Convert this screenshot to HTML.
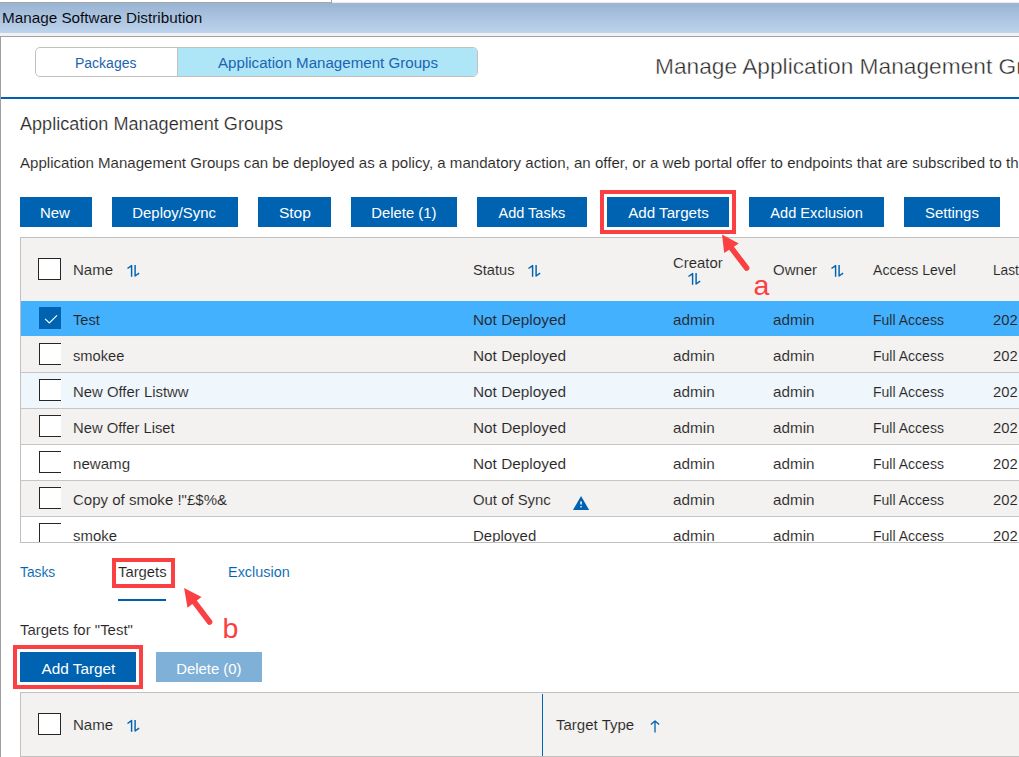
<!DOCTYPE html>
<html lang="en"><head><meta charset="utf-8"><title>Manage Software Distribution</title>
<style>
html,body{margin:0;padding:0;background:#fff}
#root{width:1019px;height:757px;overflow:hidden;position:relative;background:#fff;
 font-family:"Liberation Sans",sans-serif;font-size:15.5px;color:#272625}
.a{position:absolute}
.t{position:absolute;white-space:nowrap;line-height:20px;transform-origin:0 0;-webkit-text-stroke:0.1px #fff}
.g .t,.t.g{-webkit-text-stroke-color:#f3f2f1}
.hv .t{-webkit-text-stroke-color:#eff6fc}
.sel .t{-webkit-text-stroke-color:#44b1ff}
.tb .t,.t.tb{-webkit-text-stroke-color:#abc3e0}
.btn span{display:inline-block}
.btn{position:absolute;height:30px;background:#0063b1;color:#fff;text-align:center;
 white-space:nowrap;line-height:20px;box-sizing:border-box}
.btn.dis{background:#7fb1d8}
.row{position:absolute;left:21px;width:998px;height:35px;border-bottom:1px solid #c8c6c4}
.cb{position:absolute;left:18px;top:6px;width:22px;height:22px;box-sizing:border-box;background:#fff;
 border:1px solid #272625;border-right:0}
.cb.on{background:#0063b1;border:0}
.hcb{position:absolute;width:23px;height:22px;box-sizing:border-box;background:#fff;border:1px solid #272625}
svg{position:absolute;overflow:visible}
</style></head><body><div id="root">

<div class="a" style="left:0;top:2px;width:332px;height:1px;background:#a9a6a2"></div>
<div class="a" style="left:331px;top:0;width:1px;height:3px;background:#a9a6a2"></div>
<div class="a" style="left:0;top:3px;width:1019px;height:30px;background:linear-gradient(#98b3d3,#bed4ed)"></div>
<div class="a" style="left:332px;top:2px;width:687px;height:1px;background:#e9e9ea"></div>
<div class="a" style="left:332px;top:3px;width:687px;height:1px;background:#a9b5de"></div>
<div class="a" style="left:0;top:33px;width:1019px;height:3px;background:#f1f1f1"></div>
<div class="a" style="left:0;top:36px;width:1019px;height:1px;background:#a0a0a0"></div>
<div class="a" style="left:0;top:37px;width:1px;height:720px;background:#a0a0a0"></div>
<span class="t tb" style="left:2.15px;top:7.70px;color:#000;transform:scaleX(0.9853);">Manage Software Distribution</span>
<div class="a" style="left:35px;top:47px;width:443px;height:30px;box-sizing:border-box;border:1px solid #c4c0c0;border-radius:5px;overflow:hidden;background:#fff"><div class="a" style="left:141px;top:0;width:1px;height:28px;background:#c3c3c3"></div><div class="a" style="left:142px;top:0;width:300px;height:28px;background:#aee6f8"></div></div>
<span class="t " style="left:75.35px;top:52.50px;color:#1c64b0;transform:scaleX(0.9028);-webkit-text-stroke:0;">Packages</span>
<span class="t " style="left:217.87px;top:52.50px;color:#1c64b0;transform:scaleX(0.9745);-webkit-text-stroke:0;">Application Management Groups</span>
<span class="t " style="left:655.24px;top:57.40px;font-size:22px;transform:scaleX(1.0327);-webkit-text-stroke:0.4px #fff;">Manage Application Management Groups</span>
<div class="a" style="left:1px;top:97px;width:1018px;height:2px;background:#0060b2"></div>
<span class="t " style="left:20.16px;top:114.00px;font-size:18px;transform:scaleX(1.0036);-webkit-text-stroke:0.2px #fff;">Application Management Groups</span>
<span class="t " style="left:20.17px;top:152.70px;transform:scaleX(0.9731);">Application Management Groups can be deployed as a policy, a mandatory action, an offer, or a web portal offer to endpoints that are subscribed to th</span>
<div class="btn " style="left:20px;top:197px;width:72px;padding-top:5.50px"><span style="transform:translateX(-0.63px) scaleX(0.9639)">New</span></div>
<div class="btn " style="left:112px;top:197px;width:126px;padding-top:5.50px"><span style="transform:translateX(-0.41px) scaleX(0.9598)">Deploy/Sync</span></div>
<div class="btn " style="left:258px;top:197px;width:73px;padding-top:5.50px"><span style="transform:translateX(-0.03px) scaleX(1.0055)">Stop</span></div>
<div class="btn " style="left:351px;top:197px;width:106px;padding-top:5.50px"><span style="transform:translateX(-0.15px) scaleX(0.9556)">Delete (1)</span></div>
<div class="btn " style="left:477px;top:197px;width:110px;padding-top:5.50px"><span style="transform:translateX(0.25px) scaleX(0.9358)">Add Tasks</span></div>
<div class="btn " style="left:607px;top:197px;width:122px;padding-top:5.50px"><span style="transform:translateX(0.26px) scaleX(0.9775)">Add Targets</span></div>
<div class="btn " style="left:749px;top:197px;width:135px;padding-top:5.50px"><span style="transform:translateX(0.46px) scaleX(0.9415)">Add Exclusion</span></div>
<div class="btn " style="left:904px;top:197px;width:96px;padding-top:5.50px"><span style="transform:translateX(-0.07px) scaleX(0.9609)">Settings</span></div>
<div class="a" style="left:20px;top:237px;width:1010px;height:306px;box-sizing:border-box;border:1px solid #c2c0be;background:#fff"></div>
<div class="a" style="left:21px;top:238px;width:998px;height:63px;background:#f3f2f1"></div>
<div class="hcb" style="left:38px;top:258px"></div>
<span class="t g" style="left:72.60px;top:259.80px;transform:scaleX(0.9715);">Name</span>
<svg style="left:127px;top:265.2px" width="13" height="12" viewBox="0 0 13 12"><path d="M0.5 3.5 L4.6 0.6 V11.7 M8.1 -0.1 V11 L12.1 8.1" fill="none" stroke="#0063b1" stroke-width="1.45" stroke-linejoin="round"/></svg>
<span class="t g" style="left:472.60px;top:259.80px;transform:scaleX(0.9451);">Status</span>
<svg style="left:527.7px;top:265.2px" width="13" height="12" viewBox="0 0 13 12"><path d="M0.5 3.5 L4.6 0.6 V11.7 M8.1 -0.1 V11 L12.1 8.1" fill="none" stroke="#0063b1" stroke-width="1.45" stroke-linejoin="round"/></svg>
<span class="t g" style="left:672.60px;top:253.00px;transform:scaleX(0.9606);">Creator</span>
<svg style="left:688.1px;top:272.6px" width="13" height="12" viewBox="0 0 13 12"><path d="M0.5 3.5 L4.6 0.6 V11.7 M8.1 -0.1 V11 L12.1 8.1" fill="none" stroke="#0063b1" stroke-width="1.45" stroke-linejoin="round"/></svg>
<span class="t g" style="left:772.60px;top:259.80px;transform:scaleX(0.9649);">Owner</span>
<svg style="left:831.2px;top:265.2px" width="13" height="12" viewBox="0 0 13 12"><path d="M0.5 3.5 L4.6 0.6 V11.7 M8.1 -0.1 V11 L12.1 8.1" fill="none" stroke="#0063b1" stroke-width="1.45" stroke-linejoin="round"/></svg>
<span class="t g" style="left:872.60px;top:260.40px;transform:scaleX(0.9071);">Access Level</span>
<span class="t g" style="left:992.60px;top:259.80px;transform:scaleX(0.8841);">Last</span>
<div class="a" style="left:21px;top:301px;width:998px;height:241px;overflow:hidden">
<div class="row sel" style="left:0;top:0px;background:#44b1ff;border-bottom-color:#f3efee">
<div class="cb on"></div><svg style="left:18px;top:6px" width="22" height="22" viewBox="0 0 22 22"><path d="M6.1 11.9 L10.3 16 L18 8.3" fill="none" stroke="#fff" stroke-width="1.15"/></svg>
<span class="t " style="left:51.60px;top:8.60px;transform:scaleX(0.9466);">Test</span>
<span class="t " style="left:451.60px;top:8.60px;transform:scaleX(0.9901);">Not Deployed</span>
<span class="t " style="left:651.60px;top:8.60px;transform:scaleX(0.9876);">admin</span>
<span class="t " style="left:751.60px;top:8.60px;transform:scaleX(0.9828);">admin</span>
<span class="t " style="left:851.60px;top:8.60px;transform:scaleX(0.9046);">Full Access</span>
<span class="t " style="left:971.60px;top:8.60px;transform:scaleX(0.9529);">202</span>
</div>
<div class="row g" style="left:0;top:36px;background:#f3f2f1">
<div class="cb"></div>
<span class="t " style="left:51.60px;top:8.60px;transform:scaleX(0.9480);">smokee</span>
<span class="t " style="left:451.60px;top:8.60px;transform:scaleX(0.9901);">Not Deployed</span>
<span class="t " style="left:651.60px;top:8.60px;transform:scaleX(0.9876);">admin</span>
<span class="t " style="left:751.60px;top:8.60px;transform:scaleX(0.9828);">admin</span>
<span class="t " style="left:851.60px;top:8.60px;transform:scaleX(0.9046);">Full Access</span>
<span class="t " style="left:971.60px;top:8.60px;transform:scaleX(0.9529);">202</span>
</div>
<div class="row hv" style="left:0;top:72px;background:#eff6fc">
<div class="cb"></div>
<span class="t " style="left:51.60px;top:8.60px;transform:scaleX(0.9606);">New Offer Listww</span>
<span class="t " style="left:451.60px;top:8.60px;transform:scaleX(0.9901);">Not Deployed</span>
<span class="t " style="left:651.60px;top:8.60px;transform:scaleX(0.9876);">admin</span>
<span class="t " style="left:751.60px;top:8.60px;transform:scaleX(0.9828);">admin</span>
<span class="t " style="left:851.60px;top:8.60px;transform:scaleX(0.9046);">Full Access</span>
<span class="t " style="left:971.60px;top:8.60px;transform:scaleX(0.9529);">202</span>
</div>
<div class="row g" style="left:0;top:108px;background:#f3f2f1">
<div class="cb"></div>
<span class="t " style="left:51.60px;top:8.60px;transform:scaleX(0.9547);">New Offer Liset</span>
<span class="t " style="left:451.60px;top:8.60px;transform:scaleX(0.9901);">Not Deployed</span>
<span class="t " style="left:651.60px;top:8.60px;transform:scaleX(0.9876);">admin</span>
<span class="t " style="left:751.60px;top:8.60px;transform:scaleX(0.9828);">admin</span>
<span class="t " style="left:851.60px;top:8.60px;transform:scaleX(0.9046);">Full Access</span>
<span class="t " style="left:971.60px;top:8.60px;transform:scaleX(0.9529);">202</span>
</div>
<div class="row " style="left:0;top:144px;background:#fff">
<div class="cb"></div>
<span class="t " style="left:51.60px;top:8.60px;transform:scaleX(0.9742);">newamg</span>
<span class="t " style="left:451.60px;top:8.60px;transform:scaleX(0.9901);">Not Deployed</span>
<span class="t " style="left:651.60px;top:8.60px;transform:scaleX(0.9876);">admin</span>
<span class="t " style="left:751.60px;top:8.60px;transform:scaleX(0.9828);">admin</span>
<span class="t " style="left:851.60px;top:8.60px;transform:scaleX(0.9046);">Full Access</span>
<span class="t " style="left:971.60px;top:8.60px;transform:scaleX(0.9529);">202</span>
</div>
<div class="row g" style="left:0;top:180px;background:#f3f2f1">
<div class="cb"></div>
<span class="t " style="left:51.60px;top:8.60px;transform:scaleX(0.9697);">Copy of smoke !&quot;£$%&amp;</span>
<span class="t " style="left:451.60px;top:8.60px;transform:scaleX(0.9606);">Out of Sync</span>
<span class="t " style="left:651.60px;top:8.60px;transform:scaleX(0.9876);">admin</span>
<span class="t " style="left:751.60px;top:8.60px;transform:scaleX(0.9828);">admin</span>
<span class="t " style="left:851.60px;top:8.60px;transform:scaleX(0.9046);">Full Access</span>
<span class="t " style="left:971.60px;top:8.60px;transform:scaleX(0.9529);">202</span>
<svg style="left:551.6px;top:14.8px" width="17" height="15" viewBox="0 0 17 15"><path d="M8.05 0 L16.2 14.1 H-0.1 Z" fill="#0063b1"/><rect x="7.3" y="5.4" width="1.5" height="3.1" fill="#fff"/><rect x="7.3" y="10.1" width="1.5" height="1.3" fill="#fff"/></svg>
</div>
<div class="row " style="left:0;top:216px;background:#fff">
<div class="cb"></div>
<span class="t " style="left:51.60px;top:8.60px;transform:scaleX(0.9630);">smoke</span>
<span class="t " style="left:451.60px;top:8.60px;transform:scaleX(0.9660);">Deployed</span>
<span class="t " style="left:651.60px;top:8.60px;transform:scaleX(0.9876);">admin</span>
<span class="t " style="left:751.60px;top:8.60px;transform:scaleX(0.9828);">admin</span>
<span class="t " style="left:851.60px;top:8.60px;transform:scaleX(0.9046);">Full Access</span>
<span class="t " style="left:971.60px;top:8.60px;transform:scaleX(0.9529);">202</span>
</div>
</div>
<span class="t " style="left:19.99px;top:561.70px;color:#0063b1;transform:scaleX(0.8886);">Tasks</span>
<span class="t " style="left:117.97px;top:561.70px;color:#222;transform:scaleX(0.9555);">Targets</span>
<span class="t " style="left:228.12px;top:561.70px;color:#0063b1;transform:scaleX(0.9320);">Exclusion</span>
<div class="a" style="left:118px;top:599px;width:48px;height:2px;background:#005cad"></div>
<span class="t " style="left:19.96px;top:619.80px;transform:scaleX(0.9650);">Targets for &quot;Test&quot;</span>
<div class="btn " style="left:20px;top:652px;width:116px;padding-top:6.70px"><span style="transform:translateX(0.04px) scaleX(0.9901)">Add Target</span></div>
<div class="btn dis" style="left:156px;top:652px;width:106px;padding-top:6.70px"><span style="transform:translateX(-0.15px) scaleX(0.9602)">Delete (0)</span></div>
<div class="a" style="left:20px;top:692px;width:1010px;height:65px;box-sizing:border-box;border:1px solid #c2c0be;background:#f3f2f1"></div>
<div class="hcb" style="left:38px;top:713px"></div>
<span class="t g" style="left:72.60px;top:715.00px;transform:scaleX(0.9715);">Name</span>
<svg style="left:127px;top:720.4px" width="13" height="12" viewBox="0 0 13 12"><path d="M0.5 3.5 L4.6 0.6 V11.7 M8.1 -0.1 V11 L12.1 8.1" fill="none" stroke="#0063b1" stroke-width="1.45" stroke-linejoin="round"/></svg>
<div class="a" style="left:542px;top:694px;width:1px;height:62px;background:#0063b1"></div>
<span class="t g" style="left:555.86px;top:715.30px;transform:scaleX(0.9690);">Target Type</span>
<svg style="left:649.5px;top:719.6px" width="10" height="13" viewBox="0 0 10 13"><path d="M5 12.5 V0.9 M0.8 4.4 L5 0.9 L9.2 4.4" fill="none" stroke="#0063b1" stroke-width="1.3" stroke-linejoin="round"/></svg>
<svg style="left:0;top:0" width="1019" height="757" viewBox="0 0 1019 757"><g fill="none" stroke="#fa4042" stroke-width="4"><rect x="602" y="192" width="132" height="40"/><rect x="114" y="560" width="59" height="26"/><rect x="15" y="647" width="126" height="40"/></g><g stroke="#fa4042" stroke-width="5.6" stroke-linecap="round"><line x1="731" y1="247.5" x2="746.6" y2="268"/><line x1="194" y1="601.5" x2="209.6" y2="622"/></g><g fill="#fa4042"><path d="M722 234.6 L738.8 243.6 L724.2 253.1 Z"/><path d="M184.1 588.1 L201.5 597 L187.5 607.7 Z"/></g><text x="753.4" y="295.4" font-family="Liberation Sans, sans-serif" font-size="28.5" fill="#fa4042">a</text><text x="222.4" y="637.6" font-family="Liberation Sans, sans-serif" font-size="28.5" fill="#fa4042">b</text></svg>
</div></body></html>
